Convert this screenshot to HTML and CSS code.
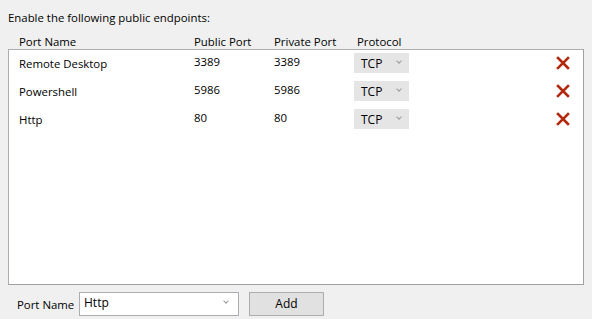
FILE: index.html
```html
<!DOCTYPE html>
<html>
    <head>
        <meta charset="UTF-8">
        <title>Endpoints</title>
        <link rel="stylesheet" href="styles.css">
    </head>
    <body>
        <div id="wrap">
            <p class="title">Enable the following public endpoints:</p>
            <ul class="head">
                <li class="c-name">Port Name</li>
                <li class="c-pub">Public Port</li>
                <li class="c-priv">Private Port</li>
                <li class="c-proto">Protocol</li>
            </ul>
            <div class="list">
                <ul class="row">
                    <li class="c-name">Remote Desktop</li>
                    <li class="c-pub num">3389</li>
                    <li class="c-priv num">3389</li>
                    <li class="c-proto"><span class="proto">TCP<i class="arrow"></i></span></li>
                    <li class="c-del"><svg width="14" height="14" viewBox="0 0 14 14"><path d="M2 2L12 12M12 2L2 12" stroke="#b12a10" stroke-width="2.6" stroke-linecap="square"/></svg></li>
                </ul>
                <ul class="row">
                    <li class="c-name">Powershell</li>
                    <li class="c-pub num">5986</li>
                    <li class="c-priv num">5986</li>
                    <li class="c-proto"><span class="proto">TCP<i class="arrow"></i></span></li>
                    <li class="c-del"><svg width="14" height="14" viewBox="0 0 14 14"><path d="M2 2L12 12M12 2L2 12" stroke="#b12a10" stroke-width="2.6" stroke-linecap="square"/></svg></li>
                </ul>
                <ul class="row">
                    <li class="c-name">Http</li>
                    <li class="c-pub num">80</li>
                    <li class="c-priv num">80</li>
                    <li class="c-proto"><span class="proto">TCP<i class="arrow"></i></span></li>
                    <li class="c-del"><svg width="14" height="14" viewBox="0 0 14 14"><path d="M2 2L12 12M12 2L2 12" stroke="#b12a10" stroke-width="2.6" stroke-linecap="square"/></svg></li>
                </ul>
            </div>
            <div class="foot">
                <span class="label">Port Name</span>
                <span class="combo">Http<i class="arrow"></i></span>
                <span class="btn">Add</span>
            </div>
        </div>
    </body>
</html>
```

FILE: styles.css
```css
body,p,ul,li{margin:0;padding:0;list-style:none;}
body{
    background-color:#f0f0f0;
    font-family:"Open Sans","Noto Sans",sans-serif;
    font-size:11.4px;
    color:#000;
}
#wrap{
    width:576px;
    padding:9px 8px 0 8px;
}
.title{
    height:19px;
    line-height:17px;
}
.head{
    display:flex;
    height:21px;
    line-height:28px;
}
.head li,.row li{flex-shrink:0;}
.c-name{width:175px;padding-left:11px;}
.c-pub{width:80px;}
.c-priv{width:83px;}
.c-proto{width:170px;}
.c-del{width:16px;}
.list{
    background-color:#fff;
    border:1px solid #abadb3;
    border-right-color:#a0a0a0;
    border-bottom-color:#a0a0a0;
    box-sizing:border-box;
    height:236px;
}
.row{
    display:flex;
    align-items:center;
    height:28px;
}
.row:first-child{margin-top:-1px;}
.row .c-name{padding-left:10px;}
.row .num{
    margin-top:-4px;
}
.row .c-proto{margin-left:-3px;width:202px;}
.proto{
    display:flex;
    align-items:center;
    width:48px;
    height:20px;
    padding-left:7px;
    padding-top:1px;
    box-sizing:content-box;
    height:19px;
    background-color:#e5e5e5;
    font-size:12px;
    position:relative;
}
.arrow{
    position:absolute;
    right:8px;
    top:6px;
    width:3px;
    height:3px;
    border-right:1px solid #999;
    border-bottom:1px solid #999;
    transform:rotate(45deg);
}
.c-del{
    display:flex;
    align-items:center;
}
.foot{
    display:flex;
    align-items:center;
    height:36px;
    padding-top:1px;
}
.label{
    padding-left:9px;
    width:62px;
}
.combo{
    position:relative;
    width:154px;
    height:22px;
    line-height:19px;
    padding-left:4px;
    background-color:#fff;
    border:1px solid #abadb3;
    margin-right:10px;
    font-size:12px;
}
.combo .arrow{
    right:10px;
    top:6px;
}
.btn{
    width:73px;
    height:22px;
    line-height:21px;
    text-align:center;
    background-color:#e1e1e1;
    border:1px solid #adadad;
    font-size:12px;
}
```
